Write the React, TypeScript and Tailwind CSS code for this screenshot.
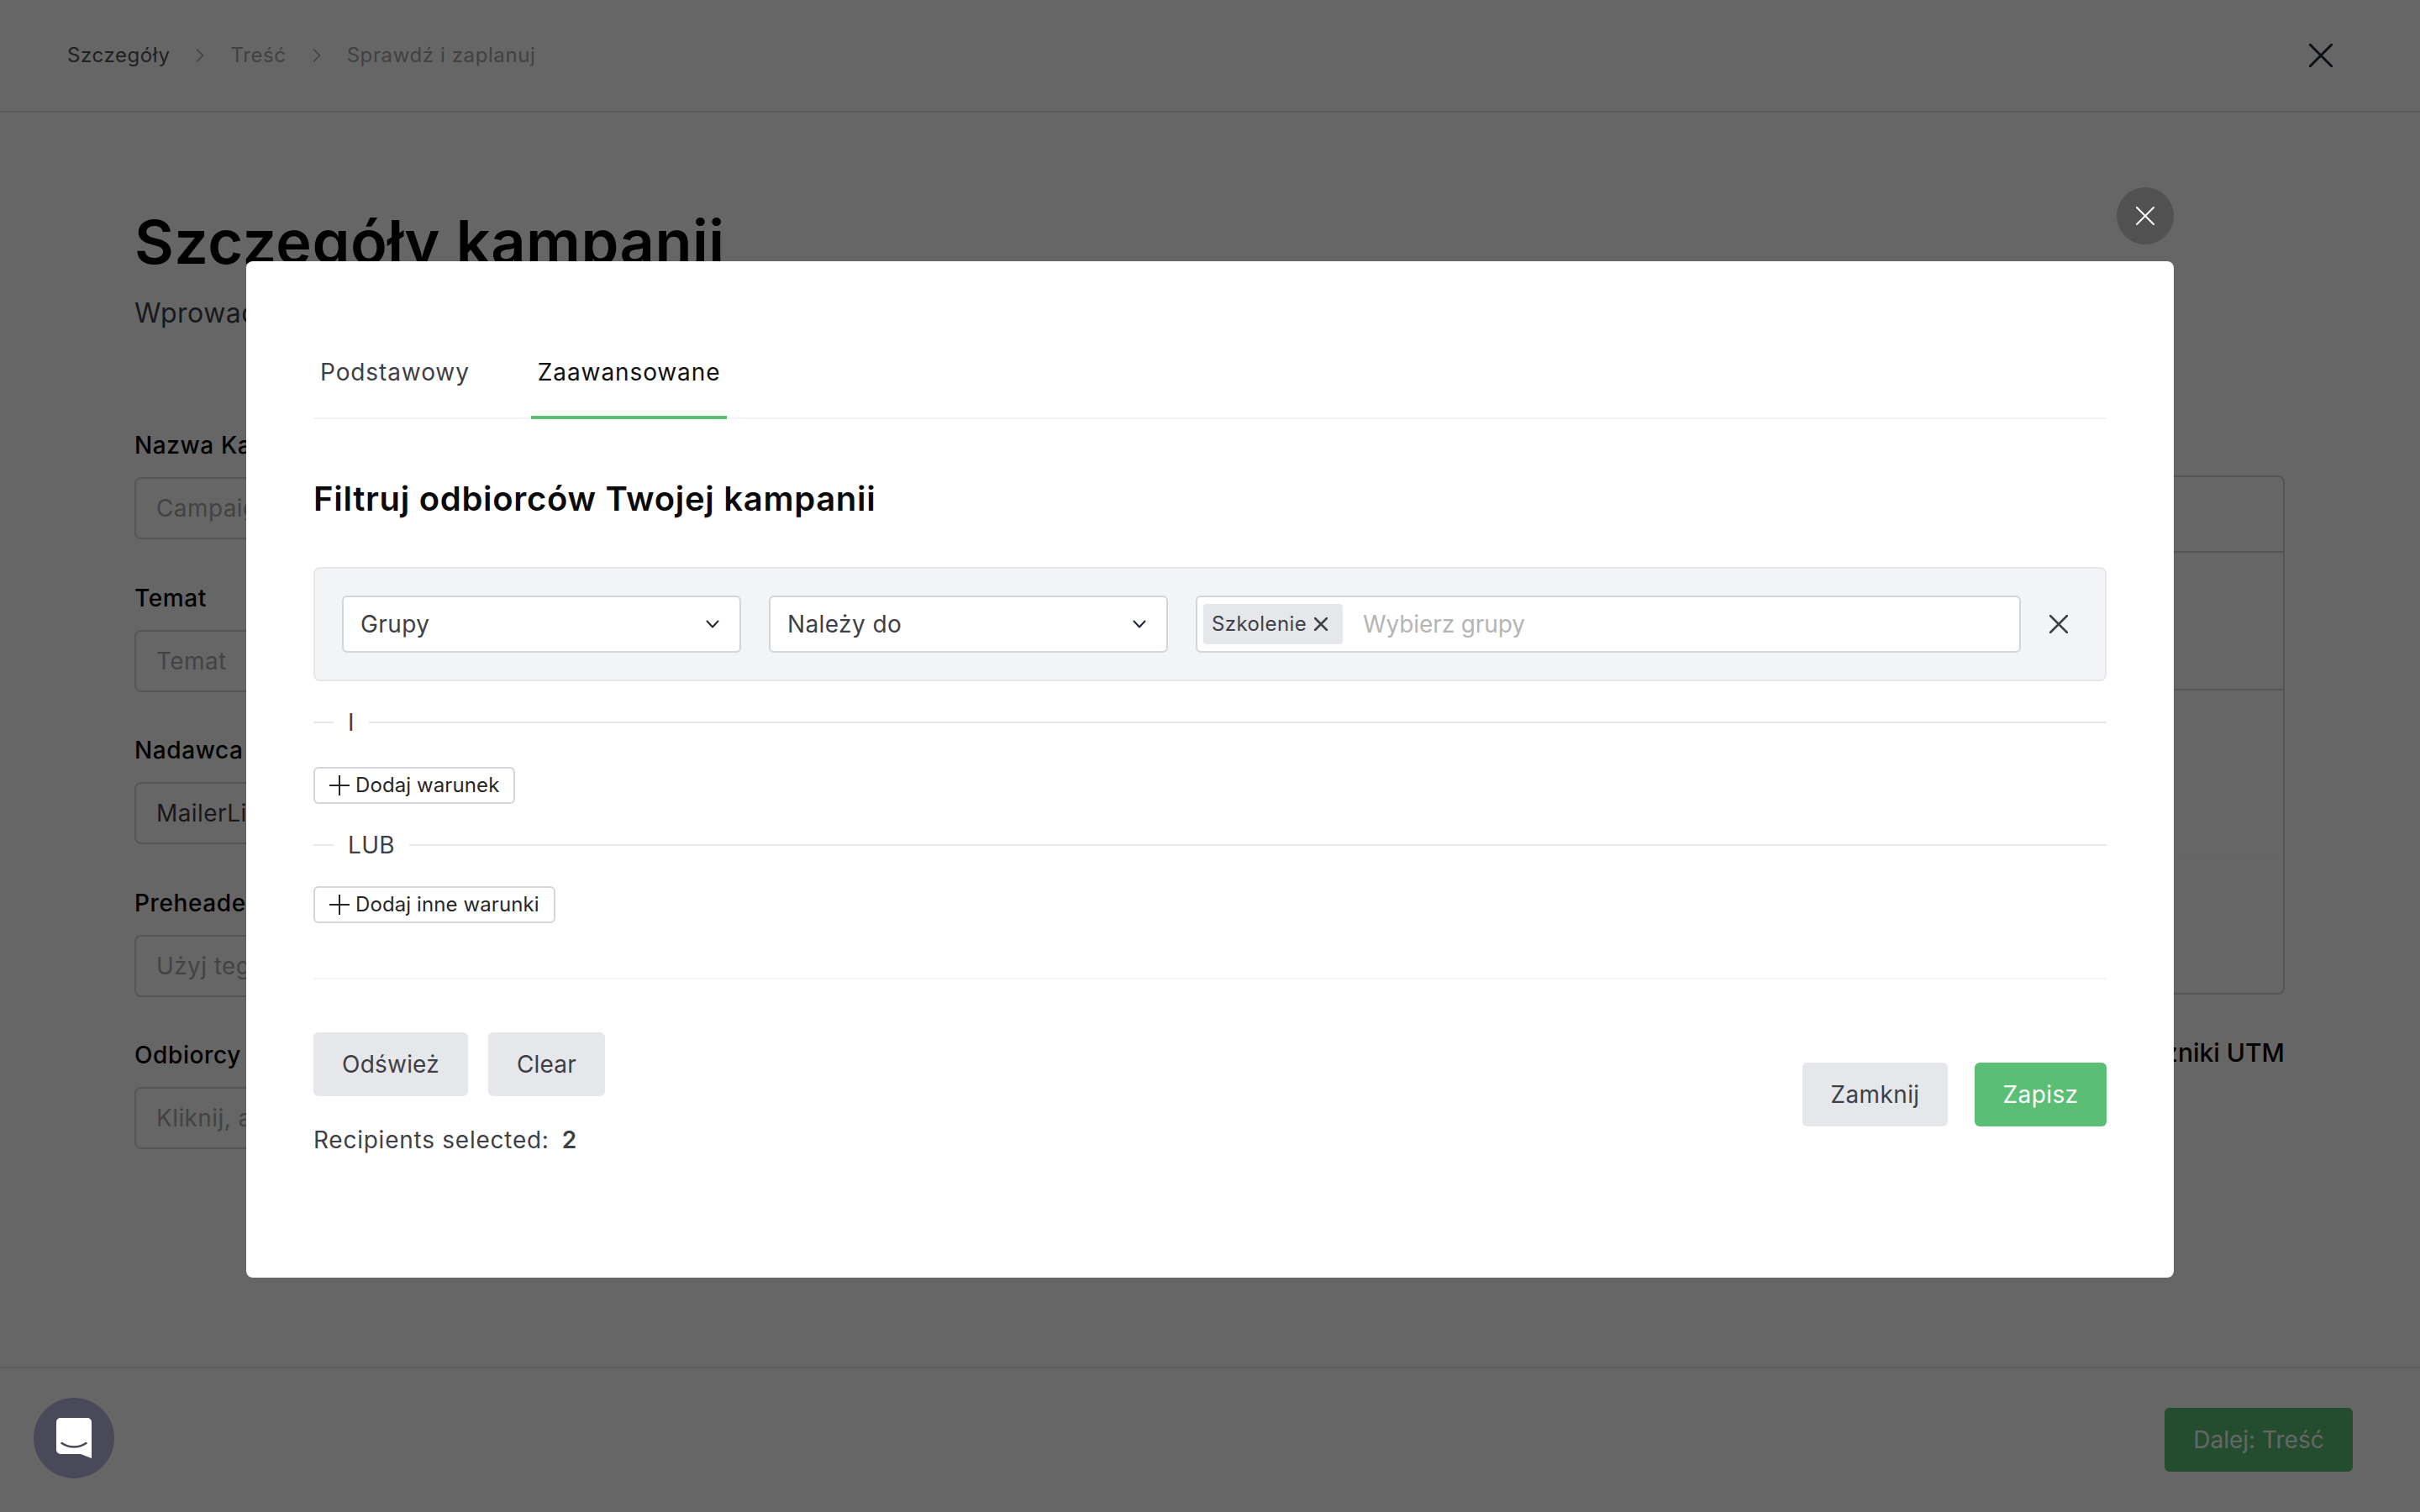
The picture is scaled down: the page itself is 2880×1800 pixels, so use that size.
import React from 'react'

const sans = { fontFamily: 'Inter, sans-serif' }

function Cross({ size, width, className }: { size: number; width: number; className?: string }) {
  return (
    <svg width={size} height={size} viewBox={`0 0 ${size} ${size}`} className={className} fill="none" stroke="currentColor" strokeWidth={width} strokeLinecap="round">
      <path d={`M1 1L${size - 1} ${size - 1}M${size - 1} 1L1 ${size - 1}`} />
    </svg>
  )
}

function Chevron() {
  return (
    <svg width="16" height="10" viewBox="0 0 16 10" fill="none" stroke="#1f2937" strokeWidth="2" strokeLinecap="round" strokeLinejoin="round">
      <path d="M1.5 1.5L8 8.5L14.5 1.5" />
    </svg>
  )
}

function CrumbArrow() {
  return (
    <svg width="10" height="16" viewBox="0 0 10 16" fill="none" stroke="currentColor" strokeWidth="1.6" strokeLinecap="round" strokeLinejoin="round">
      <path d="M1.5 1L8.5 8L1.5 15" />
    </svg>
  )
}

function Plus() {
  return (
    <svg width="24" height="24" viewBox="0 0 24 24" fill="none" stroke="#27272a" strokeWidth="2">
      <path d="M12 0V24M0 12H24" />
    </svg>
  )
}

function Field({ label, value, muted = true }: { label: string; value: string; muted?: boolean }) {
  return (
    <div className="mb-[51.5px]">
      <div className="h-[36px] text-[28px] leading-[36px] font-medium tracking-[0.6px] text-black">{label}</div>
      <div className={`mt-[20px] h-[74px] rounded-lg border-2 border-gray-300 px-[24px] text-[28px] leading-[70px] tracking-[0.4px] ${muted ? 'text-[#a8a8a8]' : 'text-[#3f3f46]'}`}>
        {value}
      </div>
    </div>
  )
}

function SelectBox({ label }: { label: string }) {
  return (
    <div className="flex h-[68px] w-[475px] flex-none items-center justify-between rounded-md border-2 border-gray-300 bg-white pl-[20px] pr-[24px]">
      <span className="text-[28px] tracking-[0.4px] text-[#3f3f46]">{label}</span>
      <Chevron />
    </div>
  )
}

function Divider({ label }: { label: string }) {
  return (
    <div className="flex h-[40px] items-center">
      <div className="h-[2px] w-[24px] bg-gray-200" />
      <span className="px-[17px] text-[28px] leading-[40px] tracking-[0.3px] text-[#3f3f46]">{label}</span>
      <div className="h-[2px] flex-1 bg-gray-200" />
    </div>
  )
}

function OutlineButton({ label }: { label: string }) {
  return (
    <button className="flex h-[44px] items-center gap-[7px] rounded-md border-2 border-gray-300 bg-white pl-[17px] pr-[17px] text-[24px] tracking-[0.1px] text-[#27272a]">
      <Plus />
      {label}
    </button>
  )
}

export default function App() {
  return (
    <div className="relative flex h-screen flex-col overflow-hidden bg-white" style={sans}>
      {/* page behind the dialog */}
      <header className="flex h-[134px] flex-none items-center justify-between border-b-2 border-gray-200 pl-[80px] pr-[104px] text-[24px] tracking-[0.6px]">
        <nav className="flex items-center text-[#a3a3a3]">
          <span className="text-[#525252]">Szczegóły</span>
          <span className="mx-[31px]"><CrumbArrow /></span>
          <span>Treść</span>
          <span className="mx-[31px]"><CrumbArrow /></span>
          <span>Sprawdź i zaplanuj</span>
        </nav>
        <span className="text-gray-800"><Cross size={28} width={3} /></span>
      </header>

      <main className="flex min-h-0 flex-1 justify-between pl-[160px] pr-[161px] pt-[114px]">
        <div className="w-[1100px]">
          <h1 className="text-[72px] leading-[80px] font-semibold tracking-[0.5px] text-black">Szczegóły kampanii</h1>
          <p className="mt-[25px] text-[32px] leading-[40px] tracking-[0.5px] text-[#3f3f46]">Wprowadź szczegóły kampanii</p>
          <div className="mt-[119px]">
            <Field label="Nazwa Kampanii" value="Campaign name" />
            <Field label="Temat" value="Temat" />
            <Field label="Nadawca" value="MailerLite" muted={false} />
            <Field label="Preheader" value="Użyj tego pola" />
            <Field label="Odbiorcy" value="Kliknij, aby wybrać" />
          </div>
        </div>
        <div className="w-[1000px] pt-[318px]">
          <div className="flex h-[618px] flex-col rounded-lg border-2 border-gray-300">
            <div className="h-[90px] border-b-2 border-gray-300" />
            <div className="h-[164px] border-b-2 border-gray-300" />
            <div className="h-[198px] shadow-xs" />
          </div>
          <div className="mt-[51px] text-right text-[30px] leading-[36px] font-medium text-black">Znaczniki UTM</div>
        </div>
      </main>

      <footer className="flex h-[173px] flex-none items-center justify-end border-t-2 border-gray-200 pb-[1px] pr-[80px]">
        <button className="h-[76px] w-[224px] rounded-md bg-[#5abf74] text-[28px] text-white">Dalej: Treść</button>
      </footer>

      {/* dim layer and dialog */}
      <div className="absolute inset-0 flex justify-center bg-black/60 pt-[311px]">
        <div className="relative h-[1210px] w-[2294px] rounded-lg bg-white px-[80px] pt-[112px]">
          <button className="absolute right-0 top-[-88px] flex h-[68px] w-[68px] items-center justify-center rounded-full bg-[#515151] text-white">
            <Cross size={22} width={2} />
          </button>

          <div className="flex gap-[65px] border-b-2 border-gray-100">
            <div className="h-[74px] px-[8px] text-[28px] leading-[40px] tracking-[0.9px] text-[#3f3f46]">Podstawowy</div>
            <div className="-mb-[2px] h-[76px] border-b-4 border-[#5abf74] px-[8px] text-[28px] leading-[40px] tracking-[0.9px] text-[#111]">Zaawansowane</div>
          </div>

          <h2 className="mt-[71px] text-[40px] leading-[48px] font-semibold tracking-[0.7px] text-[#0a0a0a]">Filtruj odbiorców Twojej kampanii</h2>

          <div className="mt-[57px] flex h-[136px] items-center gap-[33px] rounded-lg border-2 border-gray-200 bg-gray-100 pl-[32px] pr-[10px]">
            <SelectBox label="Grupy" />
            <SelectBox label="Należy do" />
            <div className="flex h-[68px] flex-1 items-center rounded-md border-2 border-gray-300 bg-white pl-[7px]">
              <div className="flex h-[48px] w-[166px] items-center gap-[9px] rounded-sm bg-gray-200 pl-[10px] text-[24px] tracking-[0.4px] text-[#3f3f46]">
                Szkolenie
                <Cross size={16} width={2.5} />
              </div>
              <span className="ml-[24px] text-[28px] tracking-[-0.1px] text-[#b5b5b5]">Wybierz grupy</span>
            </div>
            <div className="-ml-[33px] flex w-[90px] flex-none justify-center text-[#3f3f46]">
              <Cross size={22} width={2.5} />
            </div>
          </div>

          <div className="mt-[29px]"><Divider label="I" /></div>
          <div className="mt-[33px] flex"><OutlineButton label="Dodaj warunek" /></div>
          <div className="mt-[29px]"><Divider label="LUB" /></div>
          <div className="mt-[29px] flex"><OutlineButton label="Dodaj inne warunki" /></div>

          <div className="mt-[65px] h-[2px] bg-gray-100" />

          <div className="mt-[63px] flex items-center justify-between">
            <div>
              <div className="flex gap-[24px]">
                <button className="h-[76px] w-[184px] rounded-md bg-gray-200 text-[28px] tracking-[0.2px] text-[#3f3f46]">Odśwież</button>
                <button className="h-[76px] w-[139px] rounded-md bg-gray-200 text-[28px] tracking-[0.2px] text-[#3f3f46]">Clear</button>
              </div>
              <p className="mt-[32px] text-[28px] leading-[40px] tracking-[0.75px] text-[#3f3f46]">
                Recipients selected:<span className="ml-[15px] font-semibold">2</span>
              </p>
            </div>
            <div className="flex gap-[32px]">
              <button className="h-[76px] w-[173px] rounded-md bg-gray-200 text-[28px] tracking-[0.4px] text-[#3f3f46]">Zamknij</button>
              <button className="h-[76px] w-[157px] rounded-md bg-[#5abf74] text-[28px] tracking-[0.4px] text-white">Zapisz</button>
            </div>
          </div>
        </div>
      </div>

      {/* chat widget */}
      <div className="absolute bottom-[40px] left-[40px] flex h-[96px] w-[96px] items-center justify-center rounded-full bg-[#49495a]">
        <svg width="42" height="48" viewBox="0 0 42 48">
          <path d="M5 0H37A5 5 0 0 1 42 5V48L29 43H5A5 5 0 0 1 0 38V5A5 5 0 0 1 5 0Z" fill="#fff" />
          <path d="M6.5 30C15 36 27 36 35.500 30" fill="none" stroke="#49495a" strokeWidth="2.500" strokeLinecap="round" />
        </svg>
      </div>
    </div>
  )
}
